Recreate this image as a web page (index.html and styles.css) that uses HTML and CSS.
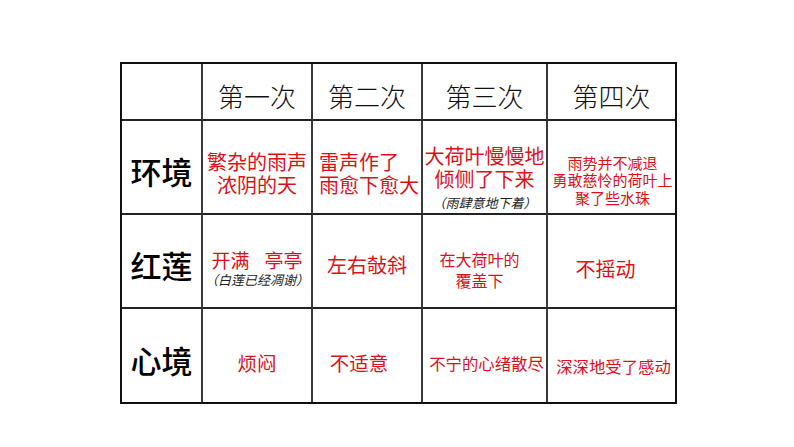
FILE: index.html
```html
<!DOCTYPE html>
<html lang="zh">
<head>
<meta charset="utf-8">
<title>荷叶·母亲</title>
<link rel="stylesheet" href="styles.css">
</head>
<body>
<div class="table">
  <div class="cell"></div>
  <div class="cell head">第一次</div>
  <div class="cell head">第二次</div>
  <div class="cell head">第三次</div>
  <div class="cell head last">第四次</div>

  <div class="cell label">环境</div>
  <div class="cell red r1a"><span>繁杂的雨声</span><span>浓阴的天</span></div>
  <div class="cell red r1b"><span>雷声作了</span><span>雨愈下愈大</span></div>
  <div class="cell red r1c"><span>大荷叶慢慢地</span><span>倾侧了下来</span><span class="note">（雨肆意地下着）</span></div>
  <div class="cell red r1d last"><span>雨势并不减退</span><span>勇敢慈怜的荷叶上</span><span>聚了些水珠</span></div>

  <div class="cell label">红莲</div>
  <div class="cell red r2a"><span class="pair"><span>开满</span><span>亭亭</span></span><span class="note">（白莲已经凋谢）</span></div>
  <div class="cell red r2b"><span>左右敧斜</span></div>
  <div class="cell red r2c"><span>在大荷叶的</span><span>覆盖下</span></div>
  <div class="cell red r2d last"><span>不摇动</span></div>

  <div class="cell label bottom">心境</div>
  <div class="cell red r3a bottom"><span>烦闷</span></div>
  <div class="cell red r3b bottom"><span>不适意</span></div>
  <div class="cell red r3c bottom"><span>不宁的心绪散尽</span></div>
  <div class="cell red r3d bottom last"><span>深深地受了感动</span></div>
</div>
</body>
</html>
```
FILE: styles.css
```css
html, body {
  margin: 0;
  padding: 0;
  background: #ffffff;
}

body {
  width: 794px;
  height: 447px;
  overflow: hidden;
  font-family: "Noto Sans CJK SC", "Noto Sans", sans-serif;
}

.table {
  display: grid;
  grid-template-columns: 81px 110px 110px 125px 127px;
  grid-template-rows: 57px 94px 94px 93px;
  width: max-content;
  margin: 62px 0 0 120px;
  border: 2px solid #111;
}

.cell {
  box-sizing: border-box;
  border-right: 2px solid #3a3a3a;
  border-bottom: 2px solid #222;
  display: flex;
  flex-direction: column;
  align-items: center;
  justify-content: center;
  white-space: nowrap;
}

.cell.last { border-right: none; }
.cell.bottom { border-bottom: none; }

.head {
  font-size: 26px;
  font-weight: 300;
  color: #111;
  padding-top: 8px;
}

.label {
  font-size: 31px;
  font-weight: 500;
  color: #000;
  padding-top: 7px;
}

.red {
  color: #dc1019;
  font-size: 20px;
  line-height: 23px;
}

.note {
  font-size: 13px;
  line-height: 16px;
  font-style: italic;
  color: #222;
}

.pair {
  display: flex;
  gap: 15px;
}

.r1a { padding-top: 12px; }
.r1b { padding-top: 12px; align-items: flex-start; padding-left: 6px; }
.r1c { padding-top: 20px; }
.r1c .note { margin-top: 5px; }
.r1d { font-size: 15px; line-height: 17.5px; padding-top: 26px; padding-left: 2px; }

.r2a { font-size: 19px; line-height: 22px; padding-top: 14px; }
.r2a .note { margin-top: 1px; }
.r2b { padding-top: 6px; }
.r2c { font-size: 16px; line-height: 21px; padding-top: 18px; padding-right: 10px; }
.r2d { padding-top: 14px; padding-right: 12px; }

.r3a { font-size: 19.5px; padding-top: 14px; }
.r3b { font-size: 19.5px; padding-top: 14px; padding-right: 16px; }
.r3c { font-size: 16.4px; padding-top: 16px; padding-left: 4px; }
.r3d { font-size: 16.4px; padding-top: 22px; padding-left: 4px; }
```
